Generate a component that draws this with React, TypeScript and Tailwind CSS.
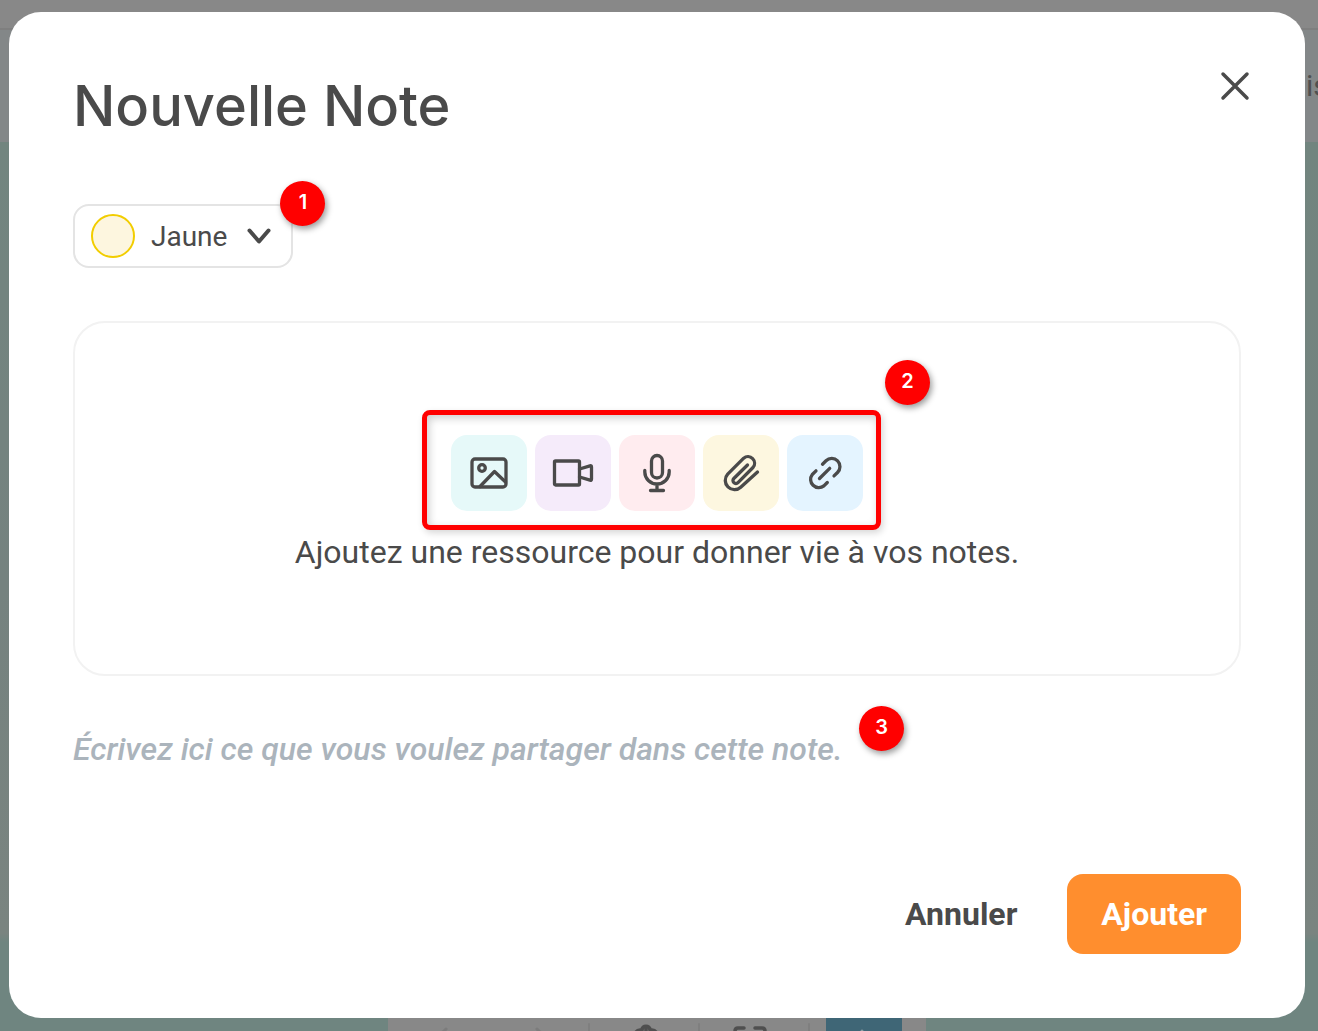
import { useState } from "react";
import type { ReactNode } from "react";

type Resource = {
  key: string;
  label: string;
  tint: string;
  icon: ReactNode;
};

const COLORS = ["Jaune", "Vert", "Bleu", "Rose"];

const RESOURCES: Resource[] = [
  {
    key: "image",
    label: "Image",
    tint: "bg-[#e6f9f9]",
    icon: (
      <>
        <rect x="3" y="6" width="34" height="28" rx="3" />
        <circle cx="13" cy="15" r="3.3" />
        <path d="M11 33.5L25.5 18.5L36.5 29" />
      </>
    ),
  },
  {
    key: "video",
    label: "Vidéo",
    tint: "bg-[#f5ebfa]",
    icon: (
      <>
        <rect x="1.5" y="8" width="25" height="24" rx="1" />
        <path d="M26.5 16L37 12.8Q38.5 12.4 38.5 14V26Q38.5 27.6 37 27.2L26.5 24" />
      </>
    ),
  },
  {
    key: "audio",
    label: "Audio",
    tint: "bg-[#ffecef]",
    icon: (
      <>
        <rect x="14.5" y="2.5" width="11" height="22.5" rx="5.5" />
        <path d="M7.8 17.5V19A12.2 12 0 0 0 32.2 19V17.5M20 31V37.5M13.5 37.5H26.5" />
      </>
    ),
  },
  {
    key: "file",
    label: "Fichier",
    tint: "bg-[#fdf7e0]",
    icon: (
      <path d="M26.5 12L12.8 25.5A2.9 2.9 0 0 0 17 29.6L32 14.5A6.6 6.6 0 0 0 22.7 5.2L6.7 21.2A9.2 9.2 0 0 0 19.7 34.2L36.5 19" />
    ),
  },
  {
    key: "link",
    label: "Lien",
    tint: "bg-[#e4f4ff]",
    icon: (
      <path d="M17.5 11.2L21 7.8A8.2 8.2 0 0 1 32.5 19.5L29 22.9M11 17.8L7.3 21.5A8.2 8.2 0 0 0 18.9 32.9L22.3 29.5M14.5 25.5L24.7 15.3" />
    ),
  },
];

function Step({ n, className }: { n: number; className: string }) {
  return (
    <span
      className={[
        "absolute flex size-[45px] items-center justify-center rounded-full bg-[#ff0000] pb-[3px] font-[Inter,sans-serif] text-xl font-semibold text-white shadow-[2px_3px_6px_rgba(0,0,0,0.4)]",
        className,
      ].join(" ")}
    >
      {n}
    </span>
  );
}

// board behind the dialog, dimmed by the overlay
function Board() {
  return (
    <div
      aria-hidden="true"
      className="absolute inset-0 flex flex-col overflow-hidden bg-[#888888]"
    >
      <div className="h-[30px] shrink-0 border-b-2 border-[#7f7f7f]" />
      <div className="flex h-28 shrink-0 items-center justify-end bg-[#838788]">
        <span className="w-3 overflow-hidden text-3xl whitespace-nowrap text-[#505050]">
          is
        </span>
      </div>
      <div className="flex flex-1 flex-col bg-[linear-gradient(#72857f_0%,#75827f_50%,#7a8480_89%,#6f8580_90%)]">
        <div className="mt-auto ml-[388px] flex h-[14px] w-[538px] items-start overflow-hidden bg-[#888888]">
          <svg
            className="shrink-0"
            width="538"
            height="14"
            fill="none"
            strokeLinecap="round"
            strokeLinejoin="round"
          >
            <g stroke="#7c7c7c" strokeWidth="3">
              <path d="M58 12L54 16M149 12L153 16" />
            </g>
            <path d="M201 7V14M311 7V14M421 7V14" stroke="#7f7f7f" strokeWidth="2" />
            <g stroke="#4f4f4f" strokeWidth="3.5">
              <path d="M248 15C250 12 252 13 254 13C254 8 262 8 262 13C264 13 266 12 268 15M258 12V14" />
              <path d="M347 15V14Q347 11 350 11H356M367 11H374Q377 11 377 14V15" />
            </g>
            <path d="M438 0H514V14H438Z" fill="#3f6676" />
            <path d="M474 14V16" stroke="#8d9da4" strokeWidth="3" />
          </svg>
        </div>
      </div>
    </div>
  );
}

export default function App() {
  const [color, setColor] = useState("Jaune");
  const [text, setText] = useState("");

  return (
    <div className="relative flex min-h-screen flex-col font-[Roboto,sans-serif] text-[#4a4a4a]">
      <Board />

      <main
        role="dialog"
        aria-labelledby="note-title"
        className="relative mt-3 mr-[13px] mb-[13px] ml-[9px] flex flex-1 flex-col rounded-[32px] bg-white px-16 pt-[60px] pb-16"
      >
        <header className="flex items-start justify-between">
          <h1
            id="note-title"
            className="font-[Inter,sans-serif] text-[56px] leading-[68px] font-medium"
          >
            Nouvelle Note
          </h1>
          <button
            type="button"
            aria-label="Fermer"
            className="-mt-2 -mr-4 flex size-11 items-center justify-center"
          >
            <svg
              width="30"
              height="30"
              fill="none"
              stroke="currentColor"
              strokeWidth="3.5"
              strokeLinecap="round"
            >
              <path d="M3 3L27 27M27 3L3 27" />
            </svg>
          </button>
        </header>

        <div className="relative mt-16 flex h-16 items-center self-start rounded-2xl border-2 border-[#e4e4e4] pr-5 pl-4">
          <span className="size-11 rounded-full border-2 border-[#f2cd00] bg-[#fdf6df]" />
          <select
            aria-label="Couleur"
            value={color}
            onChange={(e) => setColor(e.target.value)}
            className="ml-4 h-10 [field-sizing:content] appearance-none bg-transparent pt-px text-[28px] leading-9 outline-none"
          >
            {COLORS.map((c) => (
              <option key={c}>{c}</option>
            ))}
          </select>
          <svg
            className="pointer-events-none ml-5 shrink-0"
            width="24"
            height="24"
            fill="none"
            stroke="currentColor"
            strokeWidth="4"
            strokeLinecap="round"
            strokeLinejoin="round"
          >
            <path d="M2.5 6.5L12 17.5L21.5 6.5" />
          </svg>
          <Step n={1} className="-top-[25px] -right-[34px]" />
        </div>

        <section className="relative mt-[53px] flex h-[355px] flex-col items-center rounded-[32px] border-2 border-[#f2f2f2] pt-28">
          <div className="relative flex gap-2">
            {RESOURCES.map((r) => (
              <button
                key={r.key}
                type="button"
                aria-label={r.label}
                className={[
                  "flex size-[76px] items-center justify-center rounded-2xl",
                  r.tint,
                ].join(" ")}
              >
                <svg
                  width="40"
                  height="40"
                  viewBox="0 0 40 40"
                  fill="none"
                  stroke="currentColor"
                  strokeWidth="3.3"
                  strokeLinecap="round"
                  strokeLinejoin="round"
                  className="overflow-visible"
                >
                  {r.icon}
                </svg>
              </button>
            ))}
            <span className="pointer-events-none absolute -top-[25px] -right-[18px] -bottom-[19px] -left-[29px] rounded-lg border-5 border-[#ff0000] shadow-[2px_3px_7px_rgba(0,0,0,0.16),inset_2px_3px_8px_rgba(0,0,0,0.2)]" />
            <Step n={2} className="-top-[75px] -right-[67px]" />
          </div>
          <p className="mt-5 text-center text-[32px] leading-[42px]">
            Ajoutez une ressource pour donner vie à vos notes.
          </p>
        </section>

        <div className="relative mt-[52px] flex flex-1">
          <textarea
            aria-label="Texte de la note"
            placeholder="Écrivez ici ce que vous voulez partager dans cette note."
            value={text}
            onChange={(e) => setText(e.target.value)}
            className="w-full resize-none bg-transparent text-[32px] leading-[42px] font-medium italic outline-none placeholder:text-[#abb4bc]"
          />
          <Step n={3} className="-top-[22px] left-[786px]" />
        </div>

        <footer className="flex justify-end gap-4">
          <button type="button" className="h-20 px-[34px] text-[32px] font-bold">
            Annuler
          </button>
          <button
            type="button"
            className="h-20 rounded-2xl bg-[#ff8e2e] px-[34px] text-[32px] font-bold text-white"
          >
            Ajouter
          </button>
        </footer>
      </main>
    </div>
  );
}
